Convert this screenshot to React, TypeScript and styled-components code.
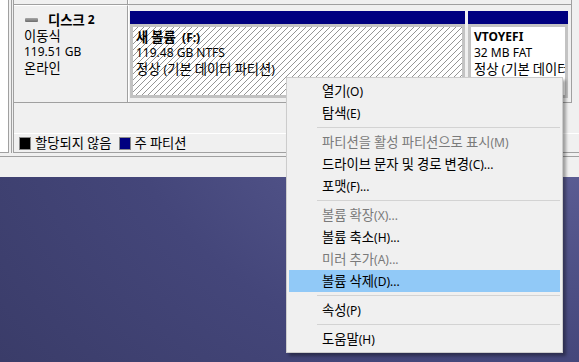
import styled, { createGlobalStyle } from "styled-components";

const GlobalStyle = createGlobalStyle`
  html, body {
    margin: 0;
    padding: 0;
  }
  body {
    width: 579px;
    height: 362px;
    overflow: hidden;
    background: radial-gradient(ellipse 120% 140% at 92% 18%, #6b6ba4 0%, #55578d 30%, #44467a 60%, #393b67 100%);
    font-family: "Noto Sans", "Noto Sans CJK KR", sans-serif;
    font-size: 12px;
    color: #000;
  }
`;

// Hangul in the reference (Malgun Gothic) runs wider than Noto CJK at 12px,
// so hangul runs get their own slightly larger span.
const HANGUL = /([\u1100-\u11FF\u3130-\u318F\uAC00-\uD7AF]+)/;

const Txt = ({ children }: { children: string }) => (
  <>
    {children.split(HANGUL).map((part, i) =>
      i % 2 === 1 ? <Hangul key={i}>{part}</Hangul> : part
    )}
  </>
);

type Partition = {
  title: string;
  size: string;
  status: string;
  width: number;
  hatched?: boolean;
};

const partitions: Partition[] = [
  { title: "새 볼륨\u00a0 (F:)", size: "119.48 GB NTFS", status: "정상 (기본 데이터 파티션)", width: 335, hatched: true },
  { title: "VTOYEFI", size: "32 MB FAT", status: "정상 (기본 데이터 파티션)", width: 100 },
];

type MenuEntry =
  | { kind: "item"; label: string; disabled?: boolean; active?: boolean }
  | { kind: "sep" };

const menu: MenuEntry[] = [
  { kind: "item", label: "열기(O)" },
  { kind: "item", label: "탐색(E)" },
  { kind: "sep" },
  { kind: "item", label: "파티션을 활성 파티션으로 표시(M)", disabled: true },
  { kind: "item", label: "드라이브 문자 및 경로 변경(C)..." },
  { kind: "item", label: "포맷(F)..." },
  { kind: "sep" },
  { kind: "item", label: "볼륨 확장(X)...", disabled: true },
  { kind: "item", label: "볼륨 축소(H)..." },
  { kind: "item", label: "미러 추가(A)...", disabled: true },
  { kind: "item", label: "볼륨 삭제(D)...", active: true },
  { kind: "sep" },
  { kind: "item", label: "속성(P)" },
  { kind: "sep" },
  { kind: "item", label: "도움말(H)" },
];

const App = () => {
  return (
    <Screen>
      <GlobalStyle />
      <Window>
        <Panes>
          <TreeStub />
          <GraphView>
            <PrevRow>
              <PrevLabel />
            </PrevRow>
            <DiskRow>
              <DiskLabel>
                <DiskName>
                  <DiskIcon />
                  <Txt>디스크 2</Txt>
                </DiskName>
                <Line><Txt>이동식</Txt></Line>
                <Line>119.51 GB</Line>
                <Line><Txt>온라인</Txt></Line>
              </DiskLabel>
              <PartitionArea>
                {partitions.map((p) => (
                  <PartitionBlock key={p.title} $width={p.width}>
                    <PartitionBar />
                    <PartitionBox $hatched={!!p.hatched}>
                      <PartitionTitle><Txt>{p.title}</Txt></PartitionTitle>
                      <Line>{p.size}</Line>
                      <Line><Txt>{p.status}</Txt></Line>
                    </PartitionBox>
                  </PartitionBlock>
                ))}
              </PartitionArea>
            </DiskRow>
            <Spacer />
            <Legend>
              <Swatch $color="#000000" />
              <LegendText><Txt>할당되지 않음</Txt></LegendText>
              <Swatch $color="#000080" />
              <LegendText><Txt>주 파티션</Txt></LegendText>
            </Legend>
          </GraphView>
        </Panes>
        <StatusStrip />
      </Window>

      <ContextMenu>
        {menu.map((entry, i) =>
          entry.kind === "sep" ? (
            <Separator key={i} />
          ) : (
            <MenuItem key={i} $disabled={!!entry.disabled} $active={!!entry.active}>
              <Txt>{entry.label}</Txt>
            </MenuItem>
          )
        )}
      </ContextMenu>
    </Screen>
  );
};

const Hangul = styled.span`
  font-family: "Noto Sans CJK KR", sans-serif;
  font-size: 13.3px;
`;

const Screen = styled.div`
  position: relative;
  width: 579px;
  height: 362px;
`;

const Window = styled.div`
  height: 177px;
  background: #f0f0f0;
  display: flex;
  flex-direction: column;
`;

const Panes = styled.div`
  display: flex;
  height: 153px;
`;

const TreeStub = styled.div`
  width: 8px;
  height: 152px;
  background: #ffffff;
  border-right: 1px solid #a0a0a0;
  border-bottom: 1px solid #a0a0a0;
`;

const GraphView = styled.div`
  flex: 1;
  margin-left: 2px;
  border-left: 3px double #a0a0a0;
  display: flex;
  flex-direction: column;
`;

const PrevRow = styled.div`
  height: 4px;
  margin-right: 7px;
  border-bottom: 1px solid #a0a0a0;
  border-right: 1px solid #a0a0a0;
  display: flex;
`;

const PrevLabel = styled.div`
  width: 113px;
  border-right: 1px solid #a0a0a0;
  box-shadow: 1px 0 0 #ffffff;
`;

const DiskRow = styled.div`
  height: 97px;
  margin-right: 7px;
  border-bottom: 1px solid #a0a0a0;
  border-right: 1px solid #a0a0a0;
  display: flex;
`;

const DiskLabel = styled.div`
  width: 103px;
  padding: 6px 0 0 10px;
  border-top: 1px solid #ffffff;
  border-right: 1px solid #a0a0a0;
  box-shadow: 1px 0 0 #ffffff;
`;

const DiskName = styled.div`
  display: flex;
  align-items: center;
  height: 16px;
  line-height: 16px;
  font-weight: bold;
  white-space: pre;
`;

const DiskIcon = styled.span`
  width: 13px;
  height: 4px;
  margin: 0 10px 0 1px;
  border-radius: 1px;
  background: linear-gradient(#a8a8a8, #6c6c6c);
`;

const Line = styled.div`
  height: 16px;
  line-height: 16px;
  white-space: nowrap;
`;

const PartitionArea = styled.div`
  flex: 1;
  display: flex;
  gap: 3px;
  padding: 6px 3px 4px 2px;
`;

const PartitionBlock = styled.div<{ $width: number }>`
  width: ${({ $width }) => $width}px;
  display: flex;
  flex-direction: column;
  overflow: hidden;
`;

const PartitionBar = styled.div`
  height: 13px;
  background: #000080;
`;

const PartitionBox = styled.div<{ $hatched: boolean }>`
  flex: 1;
  border: 3px solid #c3c3c3;
  padding: 2px 3px 0 3px;
  overflow: hidden;
  background: ${({ $hatched }) =>
    $hatched
      ? "repeating-linear-gradient(135deg, #ffffff 0px, #ffffff 3.2px, #959595 3.2px, #959595 4.24px)"
      : "#ffffff"};
`;

const PartitionTitle = styled(Line)`
  font-weight: bold;
`;

const Spacer = styled.div`
  flex: 1;
`;

const Legend = styled.div`
  height: 18px;
  border-top: 1px solid #ffffff;
  border-bottom: 1px solid #a0a0a0;
  display: flex;
  align-items: center;
  padding-left: 5px;
`;

const Swatch = styled.span<{ $color: string }>`
  width: 10px;
  height: 11px;
  background: ${({ $color }) => $color};
  border: 1px solid #8a8a8a;
  margin-right: 4px;
`;

const LegendText = styled.span`
  line-height: 16px;
  margin-right: 7px;
`;

const StatusStrip = styled.div`
  flex: 1;
  margin-top: 3px;
  border-top: 1px solid #a0a0a0;
`;

const ContextMenu = styled.div`
  position: absolute;
  left: 286px;
  top: 77px;
  width: 277px;
  box-sizing: border-box;
  padding: 2px 0;
  background: #f0f0f0;
  border: 1px solid #cccccc;
  box-shadow: 3px 3px 3px rgba(0, 0, 0, 0.35);
`;

const MenuItem = styled.div<{ $disabled: boolean; $active: boolean }>`
  height: 22px;
  line-height: 22px;
  margin: 0 2px;
  padding-left: 33px;
  white-space: nowrap;
  color: ${({ $disabled }) => ($disabled ? "#7a7a7a" : "#000000")};
  background: ${({ $active }) => ($active ? "#91c9f7" : "transparent")};
`;

const Separator = styled.div`
  height: 0;
  margin: 3px 2px 3px 30px;
  border-top: 1px solid #d3d3d3;
`;

export default App;
